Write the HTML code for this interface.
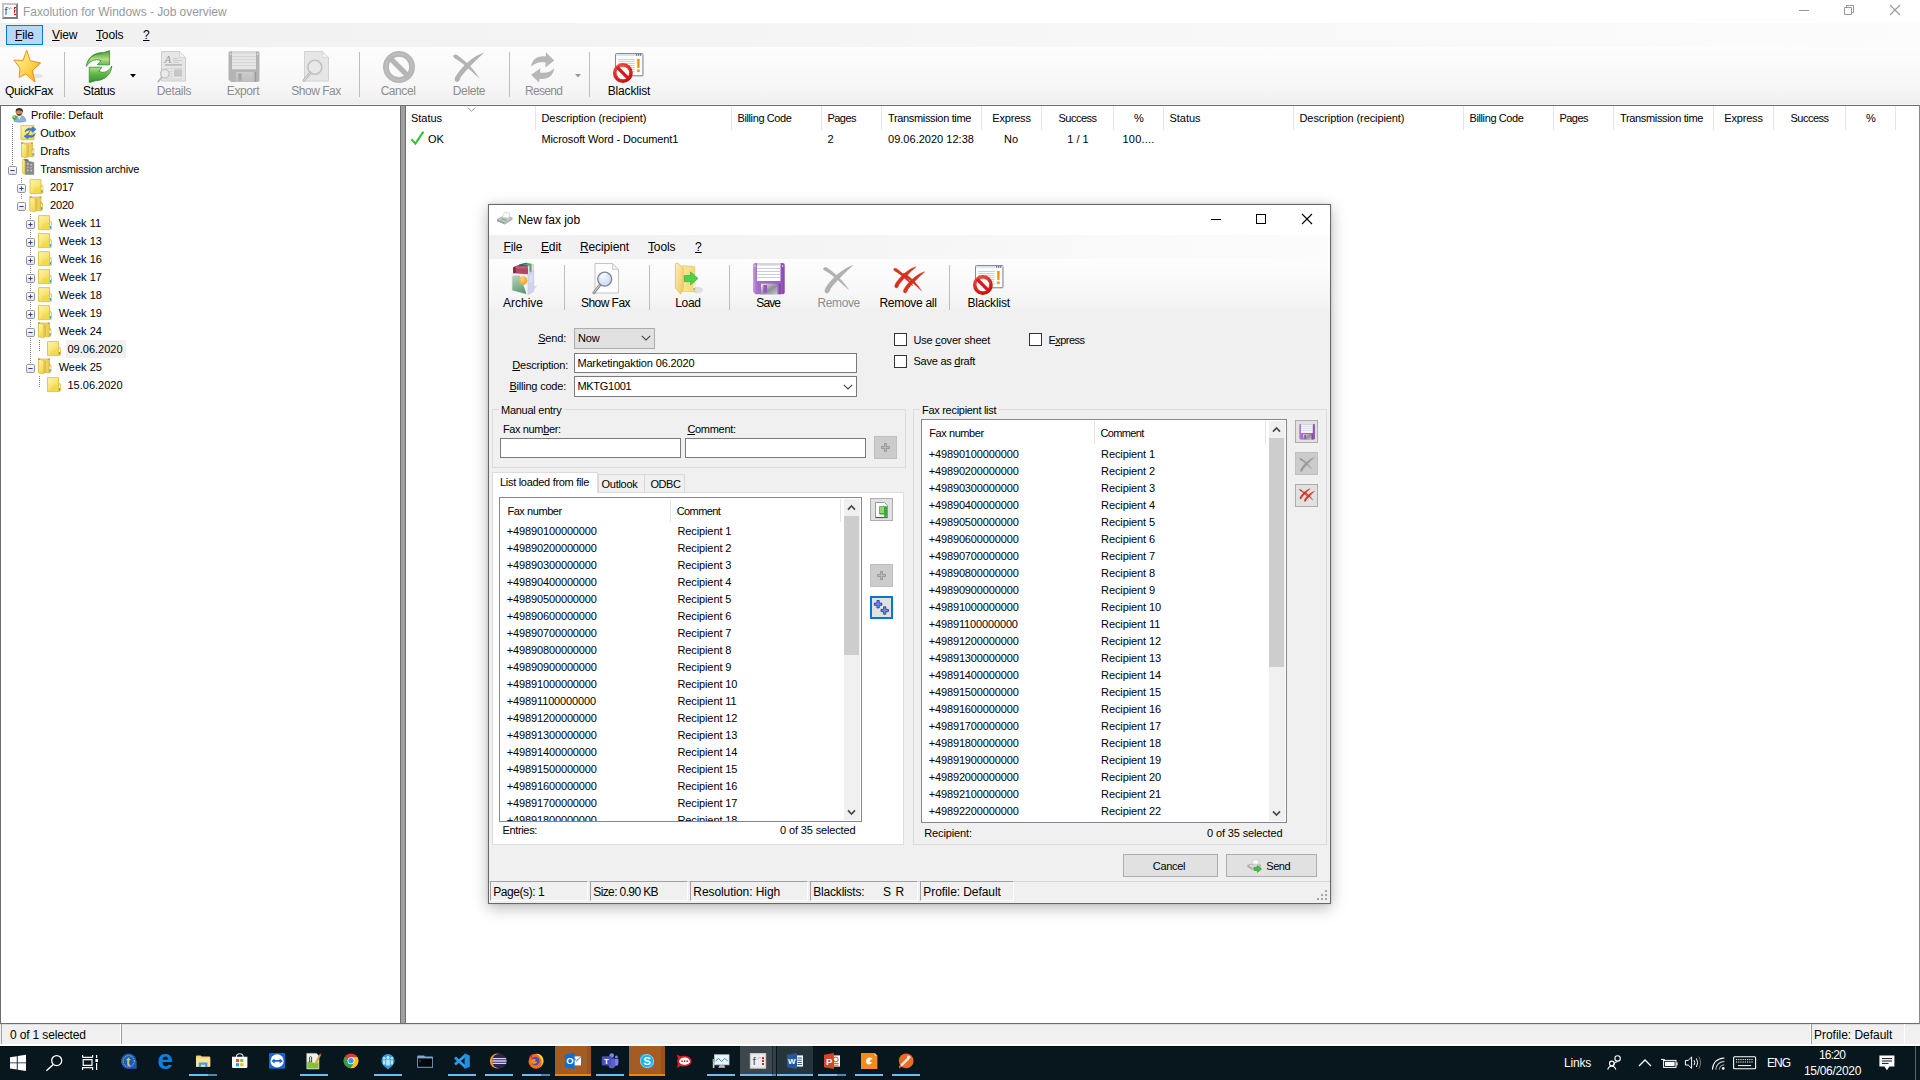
<!DOCTYPE html>
<html lang="en"><head><meta charset="utf-8"><title>Faxolution for Windows - Job overview</title>
<style>
*{box-sizing:border-box;margin:0;padding:0}
html,body{width:1920px;height:1080px;overflow:hidden;background:#fff}
body{font-family:"Liberation Sans",sans-serif;font-size:11px;color:#000;position:relative}
.a{position:absolute;white-space:nowrap}
.seg{font-size:12px;letter-spacing:-0.15px}
u{text-decoration:underline;text-underline-offset:1px}
svg{position:absolute;overflow:visible}
/* main window */
#title{left:0;top:0;width:1920px;height:23px;background:#fff}
#menubar{left:0;top:23px;width:1920px;height:24px;background:linear-gradient(90deg,#f0f0f0 0,#fcfcfc 100%)}
#toolbar{left:0;top:47px;width:1920px;height:58px;background:linear-gradient(180deg,#fdfdfd 0,#f9f9f9 45%,#f5f5f5 78%,#eeeeee 98%,#fbfbfb 100%)}
.tb{font-size:12px;letter-spacing:-0.25px;text-align:center;transform:translateX(-50%)}
.dis{color:#8d8d8d}
.tsep{width:1px;background:#bdbdbd}
#tree{left:0;top:105px;width:401px;height:919px;background:#fff;border:1px solid #6d6d6d}
#split{left:401px;top:105px;width:4px;height:919px;background:#a0a0a0;border-top:1px solid #6d6d6d;border-bottom:1px solid #6d6d6d}
#list{left:405px;top:105px;width:1515px;height:919px;background:#fff;border:1px solid #6d6d6d;border-right-color:#8a8a8a}
#status{left:0;top:1024px;width:1920px;height:22px;background:#f0f0f0;border-bottom:2px solid #fff;border-top:1px solid #dcdcdc}
#taskbar{left:0;top:1046px;width:1920px;height:34px;background:#07171d;border-top:1px solid #020c10}
.tr{font-size:11px}
.hsep{width:1px;height:24px;top:106px;background:#e5e5e5}
</style></head><body>
<!-- ===== main window title ===== -->
<div class="a" id="title"></div>
<svg style="left:2px;top:3px" width="16" height="16" viewBox="0 0 16 16"><rect x="0" y="0" width="16" height="16" fill="#c4c4c4"/><path d="M16 0V16H0L2 14H14V2Z" fill="#7f7f7f"/><rect x="2" y="2" width="12" height="12" fill="#fff"/><text x="2.6" y="12.2" font-family="Liberation Sans, sans-serif" font-size="11" fill="#555">f</text><path d="M6.6 4.6l.9 1.8l.9-1.8M9.6 5.6h.8" stroke="#8a8a8a" fill="none" stroke-width=".8"/><path d="M12 4.5h2M12 7.5h1.4M12 11.5h2M12.5 4.5v7.5" stroke="#f00" stroke-width="1" stroke-dasharray="2 1.4"/></svg>
<div class="a seg" style="left:23px;top:5px;color:#999;letter-spacing:-0.05px">Faxolution for Windows - Job overview</div>
<svg style="left:1798px;top:4px" width="12" height="12" viewBox="0 0 12 12"><path d="M1 6.5h10" stroke="#999" stroke-width="1"/></svg>
<svg style="left:1843px;top:4px" width="12" height="12" viewBox="0 0 12 12"><path d="M1.5 3.5h7v7h-7zM3.5 3.5v-2h7v7h-2" stroke="#999" fill="none" stroke-width="1"/></svg>
<svg style="left:1889px;top:4px" width="12" height="12" viewBox="0 0 12 12"><path d="M1 1l10 10M11 1L1 11" stroke="#999" stroke-width="1.1"/></svg>
<!-- ===== main menu ===== -->
<div class="a" id="menubar"></div>
<div class="a" style="left:6px;top:25px;width:37px;height:20px;background:#b8d9f4;border:1px solid #0a7ad8"></div>
<div class="a seg" style="left:15px;top:28px"><u>F</u>ile</div>
<div class="a seg" style="left:52px;top:28px"><u>V</u>iew</div>
<div class="a seg" style="left:96px;top:28px"><u>T</u>ools</div>
<div class="a seg" style="left:143px;top:28px"><u>?</u></div>
<!-- ===== main toolbar ===== -->
<div class="a" id="toolbar"></div>
<div class="a tb" style="left:29px;top:84px;letter-spacing:-0.34px">QuickFax</div>
<div class="a tsep" style="left:64px;top:52px;height:45px"></div>
<div class="a tb" style="left:99px;top:84px;letter-spacing:-0.34px">Status</div>
<svg style="left:130px;top:74px" width="6" height="4" viewBox="0 0 6 4"><path d="M0 0h6L3 3.5z" fill="#000"/></svg>
<div class="a tb dis" style="left:174px;top:84px;letter-spacing:-0.3px">Details</div>
<div class="a tb dis" style="left:243px;top:84px;letter-spacing:-0.4px">Export</div>
<div class="a tb dis" style="left:316px;top:84px;letter-spacing:-0.48px">Show Fax</div>
<div class="a tsep" style="left:359px;top:52px;height:45px"></div>
<div class="a tb dis" style="left:398px;top:84px;letter-spacing:-0.44px">Cancel</div>
<div class="a tb dis" style="left:469px;top:84px;letter-spacing:-0.4px">Delete</div>
<div class="a tsep" style="left:509px;top:52px;height:45px"></div>
<div class="a tb dis" style="left:543.7px;top:84px;letter-spacing:-0.7px">Resend</div>
<svg style="left:575px;top:74px" width="6" height="4" viewBox="0 0 6 4"><path d="M0 0h6L3 3.5z" fill="#9a9a9a"/></svg>
<div class="a tsep" style="left:589px;top:52px;height:45px"></div>
<div class="a tb" style="left:629px;top:84px;letter-spacing:-0.17px">Blacklist</div>
<svg style="left:0;top:0" width="700" height="105" viewBox="0 0 700 105">
<defs>
<linearGradient id="gStar" x1="0" y1="0" x2="1" y2="1"><stop offset="0" stop-color="#fff7b8"/><stop offset="0.4" stop-color="#ffe066"/><stop offset="0.75" stop-color="#ffc130"/><stop offset="1" stop-color="#f89c1a"/></linearGradient>
<linearGradient id="gGrn" x1="0" y1="0" x2="0" y2="1"><stop offset="0" stop-color="#3f9a35"/><stop offset="0.55" stop-color="#b5dd86"/><stop offset="1" stop-color="#56ad45"/></linearGradient>
<linearGradient id="gGrn2" x1="0" y1="0" x2="0" y2="1"><stop offset="0" stop-color="#c4e89a"/><stop offset="0.45" stop-color="#69b84f"/><stop offset="1" stop-color="#2f8f2b"/></linearGradient>
<linearGradient id="gGry" x1="0" y1="0" x2="0" y2="1"><stop offset="0" stop-color="#c9c9c9"/><stop offset="1" stop-color="#a9a9a9"/></linearGradient>
<radialGradient id="gRed" cx="0.4" cy="0.3" r="0.8"><stop offset="0" stop-color="#ff6a5a"/><stop offset="1" stop-color="#c60c0c"/></radialGradient>
</defs>
<!-- QuickFax star -->
<ellipse cx="36" cy="76" rx="7" ry="2" fill="#d8d8d8" opacity=".7"/>
<path d="M26.7 50.2L30.3 60.8L40.6 62.9L32.2 70.8L35 82L25.8 74L19.2 77.4L20 68L13.9 60.2L23 60.4Z" fill="url(#gStar)" stroke="#f0901c" stroke-width="1" stroke-linejoin="round"/>
<path d="M30.3 60.8L40.6 62.9L32.2 70.8L35 82L33 70.5L38.5 63.6Z" fill="#f08a1c" opacity=".55"/>
<!-- Status arrows -->
<path d="M86.4 66.4C87 58.5 93.5 52.3 103.6 52.6L109.5 50.7L109.6 64.8L97.4 64.8L101.1 60.7C94.5 58 89.5 61.5 86.4 66.4Z" fill="url(#gGrn)" stroke="#2f8f2c" stroke-width=".8" stroke-linejoin="round"/>
<path d="M88.2 61.5C90 56.5 95.5 53.6 102 53.8" fill="none" stroke="#2f8a2a" stroke-width="1" opacity=".6"/>
<path d="M111.75 66C111.5 74 105 80.5 95.5 80.7L89.25 82.6L89.25 67.25L101.75 67.25L98.9 71.3C104.5 74 109 71 111.75 66Z" fill="url(#gGrn2)" stroke="#2f8f2c" stroke-width=".8" stroke-linejoin="round"/>
<!-- Details (disabled) -->
<path d="M161.5 51.5H179.5L185.5 57.5V81H161.5Z" fill="#e6e6e6" stroke="#cecece" stroke-width="1"/>
<path d="M179.5 51.5V57.5H185.5Z" fill="#f2f2f2" stroke="#cecece" stroke-width=".7"/>
<text x="164.4" y="62.8" font-family="Liberation Serif, serif" font-style="italic" font-size="11" fill="#9c9c9c">A</text>
<path d="M173 58.5H178M173 60.5H182M173 62.5H179" stroke="#cacaca" stroke-width=".9"/>
<rect x="165" y="64" width="17" height="1.8" fill="#bdbdbd"/>
<path d="M166 68.5H182M170 71.5H173M170 74H173M170 76.5H173M166 79H182" stroke="#cfcfcf" stroke-width=".8"/>
<rect x="174" y="69.5" width="8" height="7" fill="#c6c6c6"/>
<circle cx="164.8" cy="73.7" r="4.3" fill="#e9e9e9" fill-opacity=".85" stroke="#c2c2c2" stroke-width="1.3"/>
<path d="M161.6 77.3L158.3 81.5" stroke="#b8b8b8" stroke-width="1.8" stroke-linecap="round"/>
<!-- Export (disabled floppy) -->
<path d="M228.5 53Q228.5 51.3 230.2 51.3H257.8Q259.5 51.3 259.5 53V80.3Q259.5 82 257.8 82H231L228.5 79.5Z" fill="#b4b4b4"/>
<rect x="232" y="51.3" width="24" height="18" fill="#e6e6e6"/>
<rect x="232" y="51.3" width="24" height="2.4" fill="#d8d8d8"/>
<path d="M232 56.5H256M232 59.5H256M232 62.5H256M232 65.5H256" stroke="#d2d2d2" stroke-width=".9"/>
<rect x="229.8" y="53.3" width="1.4" height="1.4" fill="#e8e8e8"/><rect x="256.9" y="53.3" width="1.4" height="1.4" fill="#e8e8e8"/>
<rect x="236" y="72" width="17.5" height="10" fill="url(#gGry)"/><rect x="236" y="72" width="17.5" height="10" fill="#d0d0d0" opacity=".55"/>
<rect x="238.3" y="73.3" width="3.2" height="7.5" fill="#a6a6a6"/>
<rect x="255" y="72" width="1.2" height="10" fill="#9a9a9a"/>
<!-- Show Fax (disabled) -->
<path d="M304.5 51.5H322.5L328.5 57.5V81H304.5Z" fill="#e6e6e6" stroke="#d2d2d2" stroke-width="1"/>
<path d="M322.5 51.5V57.5H328.5Z" fill="#f2f2f2" stroke="#d2d2d2" stroke-width=".7"/>
<circle cx="314.8" cy="67.3" r="7" fill="#e8e8e8" fill-opacity=".9" stroke="#c0c0c0" stroke-width="1.6"/>
<path d="M310.2 72.8L303.8 80.6" stroke="#bdbdbd" stroke-width="2.8" stroke-linecap="round"/><path d="M310 73L304 80.4" stroke="#dcdcdc" stroke-width="1" stroke-linecap="round"/>
<!-- Cancel (disabled) -->
<circle cx="399" cy="67" r="13.1" fill="none" stroke="#b6b6b6" stroke-width="5.8"/>
<circle cx="399" cy="67" r="13.1" fill="none" stroke="#c4c4c4" stroke-width="1.6" opacity=".7"/>
<path d="M389.6 57.6L408.4 76.4" stroke="#b6b6b6" stroke-width="5.4"/>
<!-- Delete (disabled) -->
<path d="M484.4 52.4C474 55 461 67 455.6 76.5C454 79.6 454.8 82.2 457.2 81.9C459.8 81.5 459.8 79 461 76.8C466 70 476 60 484.4 52.4Z" fill="#b3b3b3"/>
<path d="M453.4 55.6C454 54 456.5 54.4 458.5 56C466 61.6 474 69 479.8 78.8C470.5 70.5 462.5 62.4 455 58.4C453.6 57.6 453 56.6 453.4 55.6Z" fill="#b3b3b3"/>
<!-- Resend (disabled) -->
<path d="M531.2 66.8C531.8 59 538 55.3 545.6 56.4L546 52.4L554.3 60.4L545.3 67.4L545.6 62.8C540 61.4 535 63 531.2 66.8Z" fill="#b7b7b7"/>
<path d="M554.1 68.2C553.5 76 547 79.9 539.6 78.8L539 82.6L531.1 74.8L540.5 68.2L540 72.4C545.6 73.6 550.6 72 554.1 68.2Z" fill="#b7b7b7"/>
<!-- Blacklist -->
<rect x="616.2" y="54.4" width="27.6" height="22.4" rx="1" fill="#000" opacity=".10"/>
<rect x="615.5" y="53.5" width="27.4" height="22.2" rx=".8" fill="#fdfdfd" stroke="#858b96" stroke-width="1"/>
<rect x="616" y="54" width="26.4" height="2" fill="#dde3ee"/>
<path d="M636 54.8h1.2M638 54.8h1.2M640 54.8h1.2" stroke="#3c4c7c" stroke-width="1.2"/>
<path d="M618.2 59.5H634.6M618.2 61.5H634.6M618.2 63.5H634.6M618.2 65.5H634.6M618.2 67.5H634.6M618.2 69.5H634.6M618.2 71.5H634.6" stroke="#c4c4c4" stroke-width=".8"/>
<text x="635.6" y="72.4" font-family="Liberation Sans, sans-serif" font-weight="bold" font-size="18" fill="#ec9414">!</text>
<circle cx="622.9" cy="73" r="8.1" fill="#fff" fill-opacity=".82" stroke="url(#gRed)" stroke-width="3.6"/>
<path d="M617.3 67.4L628.5 78.6" stroke="#d81818" stroke-width="3.3"/>
</svg>

<!-- ===== panels ===== -->
<div class="a" id="tree"></div>
<div class="a" id="split"></div>
<div class="a" id="list"></div>
<svg style="left:0;top:0" width="402" height="400" viewBox="0 0 402 400">
<defs><linearGradient id="gF" x1="0" y1="0" x2="0.6" y2="1"><stop offset="0" stop-color="#fdf6b8"/><stop offset="0.55" stop-color="#f8e67a"/><stop offset="1" stop-color="#f1d74a"/></linearGradient><linearGradient id="gF2" x1="0" y1="0" x2="1" y2="0"><stop offset="0" stop-color="#fbf0a0"/><stop offset="1" stop-color="#e9c84a"/></linearGradient><linearGradient id="gBx" x1="0" y1="0" x2="0" y2="1"><stop offset="0" stop-color="#fff"/><stop offset="1" stop-color="#e2e2e2"/></linearGradient></defs>
<path d="M12.5 124V166" stroke="#808080" stroke-width="1" stroke-dasharray="1 1"/>
<path d="M21.5 178V200" stroke="#808080" stroke-width="1" stroke-dasharray="1 1"/>
<path d="M30.5 214V364" stroke="#808080" stroke-width="1" stroke-dasharray="1 1"/>
<path d="M39.5 340V352" stroke="#808080" stroke-width="1" stroke-dasharray="1 1"/>
<path d="M39.5 376V388" stroke="#808080" stroke-width="1" stroke-dasharray="1 1"/>
<g transform="translate(12,107)"><path d="M2 14.5Q2 8.5 7.5 8.5Q13.5 8.5 13.8 14.2Q8 16 2 14.5Z" fill="#8fb3d9" stroke="#6a8fbd" stroke-width=".6"/><path d="M5.8 9L7.4 12.5L9 9Z" fill="#f4f4f4"/><circle cx="7.2" cy="5.2" r="3.4" fill="#c98a5a"/><path d="M3.6 5Q3.4 1 7.2 1Q11.6 1 10.9 5.5Q9.5 3 7 3.2Q4.6 3.2 3.6 5Z" fill="#3b2a1a"/><path d="M4.3 6.3Q7.2 11 10.2 6.3Q7.2 8 4.3 6.3Z" fill="#4a2f1a"/><circle cx="2.6" cy="10.6" r="2.4" fill="#3fae3a"/><circle cx="2.2" cy="10" r="1" fill="#b7e88f"/></g>
<g transform="translate(20.5,125.2)"><rect x=".5" y=".5" width="13" height="14" fill="url(#gF)" stroke="#e2bd4c" stroke-width=".9"/><path d="M4.5 6.8C5 3.6 8.5 2.2 11 3.6L12 1.6L15.6 4.2L11.6 7L11.4 5.2C9 4.3 6.2 5 4.5 6.8Z" fill="#2f7fe0" stroke="#1c5fbf" stroke-width=".5"/><path d="M14.8 8.2C14.2 11.6 10.8 13 8.2 11.6L7.4 13.6L3.6 11L7.6 8.2L7.8 10C10.4 10.9 13 10.2 14.8 8.2Z" fill="#2f7fe0" stroke="#1c5fbf" stroke-width=".5"/><path d="M7.5 9L10 5" stroke="#a33" stroke-width=".8"/></g>
<path d="M21.5 143.0H32.5V156.7H21.5Z" fill="url(#gF2)" stroke="#d9b848" stroke-width=".8"/><path d="M21.5 143.2L26.8 144.39999999999998V157.79999999999998L21.5 156.79999999999998Z" fill="url(#gF)" stroke="#e2bd4c" stroke-width=".8"/><path d="M27.3 144.7L29.0 144.2V156.2L27.3 157.2Z" fill="#d8b83e" opacity=".8"/><path d="M32.3 148.0L34.0 149.2V155.79999999999998L32.3 156.7Z" fill="#efd050" stroke="#c9a840" stroke-width=".6"/><rect x="32.6" y="150.2" width="1" height="3.4" fill="#fff"/><rect x="32.6" y="153.2" width="1" height="2" fill="#1aa3e0"/><rect x="21.0" y="142.5" width="2" height="1" fill="#666" opacity=".7"/><rect x="31.0" y="142.5" width="2" height="1" fill="#666" opacity=".5"/>
<g transform="translate(22.0,158.2)"><path d="M.5 1L3.2 1.8V16L.5 15Z" fill="url(#gF)" stroke="#e2bd4c" stroke-width=".7"/><path d="M3.4 2.2L11.8 4.2V16.2L3.4 16.2Z" fill="#8a8a8a" stroke="#777" stroke-width=".5"/><path d="M2.2 .6L6.6 1.4L6.6 3.2L2.4 2.2Z" fill="#6f6f6f"/><g fill="#c9d3ee"><rect x="5" y="5" width="1.5" height="1.5"/><rect x="8.4" y="5.8" width="1.5" height="1.5"/><rect x="5" y="11.4" width="1.5" height="1.5"/><rect x="8.4" y="11.6" width="1.5" height="1.5"/></g><g fill="#f0b44a"><rect x="5" y="8.2" width="1.5" height="1.5"/><rect x="8.4" y="8.8" width="1.5" height="1.5"/></g><rect x="5" y="14.2" width="1.5" height="1.2" fill="#57b487"/><rect x="8.4" y="14.2" width="1.5" height="1.2" fill="#57b487"/></g>
<rect x="8.5" y="166.5" width="8" height="8" rx="1.2" fill="url(#gBx)" stroke="#939393" stroke-width="1"/><path d="M10.4 170.5H14.6" stroke="#26429e" stroke-width="1"/>
<path d="M30.0 179.6H41.0V193.6H30.0Z" fill="url(#gF)" stroke="#e6c458" stroke-width="1"/><path d="M32.5 193.1Q33.5 187.6 38.5 187.1H40.5V193.1Z" fill="#f0da48" opacity=".75"/><path d="M41.0 184.7L43.0 186.1V193.1L41.0 193.6Z" fill="#efd050" stroke="#d9b848" stroke-width=".6"/><rect x="41.5" y="186.7" width="1" height="3.6" fill="#fff"/><rect x="41.5" y="190.1" width="1" height="2.2" fill="#1aa3e0"/>
<rect x="17.5" y="184.5" width="8" height="8" rx="1.2" fill="url(#gBx)" stroke="#939393" stroke-width="1"/><path d="M19.4 188.5H23.6" stroke="#26429e" stroke-width="1"/><path d="M21.5 186.4V190.6" stroke="#26429e" stroke-width="1"/>
<path d="M30.0 197.0H41.0V210.7H30.0Z" fill="url(#gF2)" stroke="#d9b848" stroke-width=".8"/><path d="M30.0 197.2L35.3 198.39999999999998V211.79999999999998L30.0 210.79999999999998Z" fill="url(#gF)" stroke="#e2bd4c" stroke-width=".8"/><path d="M35.8 198.7L37.5 198.2V210.2L35.8 211.2Z" fill="#d8b83e" opacity=".8"/><path d="M40.8 202.0L42.5 203.2V209.79999999999998L40.8 210.7Z" fill="#efd050" stroke="#c9a840" stroke-width=".6"/><rect x="41.1" y="204.2" width="1" height="3.4" fill="#fff"/><rect x="41.1" y="207.2" width="1" height="2" fill="#1aa3e0"/><rect x="29.5" y="196.5" width="2" height="1" fill="#666" opacity=".7"/><rect x="39.5" y="196.5" width="2" height="1" fill="#666" opacity=".5"/>
<rect x="17.5" y="202.5" width="8" height="8" rx="1.2" fill="url(#gBx)" stroke="#939393" stroke-width="1"/><path d="M19.4 206.5H23.6" stroke="#26429e" stroke-width="1"/>
<path d="M38.5 215.6H49.5V229.6H38.5Z" fill="url(#gF)" stroke="#e6c458" stroke-width="1"/><path d="M41 229.1Q42 223.6 47 223.1H49V229.1Z" fill="#f0da48" opacity=".75"/><path d="M49.5 220.7L51.5 222.1V229.1L49.5 229.6Z" fill="#efd050" stroke="#d9b848" stroke-width=".6"/><rect x="50" y="222.7" width="1" height="3.6" fill="#fff"/><rect x="50" y="226.1" width="1" height="2.2" fill="#1aa3e0"/>
<rect x="26.5" y="220.5" width="8" height="8" rx="1.2" fill="url(#gBx)" stroke="#939393" stroke-width="1"/><path d="M28.4 224.5H32.6" stroke="#26429e" stroke-width="1"/><path d="M30.5 222.4V226.6" stroke="#26429e" stroke-width="1"/>
<path d="M38.5 233.6H49.5V247.6H38.5Z" fill="url(#gF)" stroke="#e6c458" stroke-width="1"/><path d="M41 247.1Q42 241.6 47 241.1H49V247.1Z" fill="#f0da48" opacity=".75"/><path d="M49.5 238.7L51.5 240.1V247.1L49.5 247.6Z" fill="#efd050" stroke="#d9b848" stroke-width=".6"/><rect x="50" y="240.7" width="1" height="3.6" fill="#fff"/><rect x="50" y="244.1" width="1" height="2.2" fill="#1aa3e0"/>
<rect x="26.5" y="238.5" width="8" height="8" rx="1.2" fill="url(#gBx)" stroke="#939393" stroke-width="1"/><path d="M28.4 242.5H32.6" stroke="#26429e" stroke-width="1"/><path d="M30.5 240.4V244.6" stroke="#26429e" stroke-width="1"/>
<path d="M38.5 251.6H49.5V265.6H38.5Z" fill="url(#gF)" stroke="#e6c458" stroke-width="1"/><path d="M41 265.1Q42 259.6 47 259.1H49V265.1Z" fill="#f0da48" opacity=".75"/><path d="M49.5 256.7L51.5 258.1V265.1L49.5 265.6Z" fill="#efd050" stroke="#d9b848" stroke-width=".6"/><rect x="50" y="258.7" width="1" height="3.6" fill="#fff"/><rect x="50" y="262.1" width="1" height="2.2" fill="#1aa3e0"/>
<rect x="26.5" y="256.5" width="8" height="8" rx="1.2" fill="url(#gBx)" stroke="#939393" stroke-width="1"/><path d="M28.4 260.5H32.6" stroke="#26429e" stroke-width="1"/><path d="M30.5 258.4V262.6" stroke="#26429e" stroke-width="1"/>
<path d="M38.5 269.6H49.5V283.6H38.5Z" fill="url(#gF)" stroke="#e6c458" stroke-width="1"/><path d="M41 283.1Q42 277.6 47 277.1H49V283.1Z" fill="#f0da48" opacity=".75"/><path d="M49.5 274.70000000000005L51.5 276.1V283.1L49.5 283.6Z" fill="#efd050" stroke="#d9b848" stroke-width=".6"/><rect x="50" y="276.70000000000005" width="1" height="3.6" fill="#fff"/><rect x="50" y="280.1" width="1" height="2.2" fill="#1aa3e0"/>
<rect x="26.5" y="274.5" width="8" height="8" rx="1.2" fill="url(#gBx)" stroke="#939393" stroke-width="1"/><path d="M28.4 278.5H32.6" stroke="#26429e" stroke-width="1"/><path d="M30.5 276.4V280.6" stroke="#26429e" stroke-width="1"/>
<path d="M38.5 287.6H49.5V301.6H38.5Z" fill="url(#gF)" stroke="#e6c458" stroke-width="1"/><path d="M41 301.1Q42 295.6 47 295.1H49V301.1Z" fill="#f0da48" opacity=".75"/><path d="M49.5 292.70000000000005L51.5 294.1V301.1L49.5 301.6Z" fill="#efd050" stroke="#d9b848" stroke-width=".6"/><rect x="50" y="294.70000000000005" width="1" height="3.6" fill="#fff"/><rect x="50" y="298.1" width="1" height="2.2" fill="#1aa3e0"/>
<rect x="26.5" y="292.5" width="8" height="8" rx="1.2" fill="url(#gBx)" stroke="#939393" stroke-width="1"/><path d="M28.4 296.5H32.6" stroke="#26429e" stroke-width="1"/><path d="M30.5 294.4V298.6" stroke="#26429e" stroke-width="1"/>
<path d="M38.5 305.6H49.5V319.6H38.5Z" fill="url(#gF)" stroke="#e6c458" stroke-width="1"/><path d="M41 319.1Q42 313.6 47 313.1H49V319.1Z" fill="#f0da48" opacity=".75"/><path d="M49.5 310.70000000000005L51.5 312.1V319.1L49.5 319.6Z" fill="#efd050" stroke="#d9b848" stroke-width=".6"/><rect x="50" y="312.70000000000005" width="1" height="3.6" fill="#fff"/><rect x="50" y="316.1" width="1" height="2.2" fill="#1aa3e0"/>
<rect x="26.5" y="310.5" width="8" height="8" rx="1.2" fill="url(#gBx)" stroke="#939393" stroke-width="1"/><path d="M28.4 314.5H32.6" stroke="#26429e" stroke-width="1"/><path d="M30.5 312.4V316.6" stroke="#26429e" stroke-width="1"/>
<path d="M38.5 323.0H49.5V336.7H38.5Z" fill="url(#gF2)" stroke="#d9b848" stroke-width=".8"/><path d="M38.5 323.2L43.8 324.4V337.8L38.5 336.8Z" fill="url(#gF)" stroke="#e2bd4c" stroke-width=".8"/><path d="M44.3 324.7L46 324.2V336.2L44.3 337.2Z" fill="#d8b83e" opacity=".8"/><path d="M49.3 328.0L51 329.2V335.8L49.3 336.7Z" fill="#efd050" stroke="#c9a840" stroke-width=".6"/><rect x="49.6" y="330.2" width="1" height="3.4" fill="#fff"/><rect x="49.6" y="333.2" width="1" height="2" fill="#1aa3e0"/><rect x="38" y="322.5" width="2" height="1" fill="#666" opacity=".7"/><rect x="48" y="322.5" width="2" height="1" fill="#666" opacity=".5"/>
<rect x="26.5" y="328.5" width="8" height="8" rx="1.2" fill="url(#gBx)" stroke="#939393" stroke-width="1"/><path d="M28.4 332.5H32.6" stroke="#26429e" stroke-width="1"/>
<path d="M47.5 341.6H58.5V355.6H47.5Z" fill="url(#gF)" stroke="#e6c458" stroke-width="1"/><path d="M50 355.1Q51 349.6 56 349.1H58V355.1Z" fill="#f0da48" opacity=".75"/><path d="M58.5 346.70000000000005L60.5 348.1V355.1L58.5 355.6Z" fill="#efd050" stroke="#d9b848" stroke-width=".6"/><rect x="59" y="348.70000000000005" width="1" height="3.6" fill="#fff"/><rect x="59" y="352.1" width="1" height="2.2" fill="#1aa3e0"/>
<path d="M38.5 359.0H49.5V372.7H38.5Z" fill="url(#gF2)" stroke="#d9b848" stroke-width=".8"/><path d="M38.5 359.2L43.8 360.4V373.8L38.5 372.8Z" fill="url(#gF)" stroke="#e2bd4c" stroke-width=".8"/><path d="M44.3 360.7L46 360.2V372.2L44.3 373.2Z" fill="#d8b83e" opacity=".8"/><path d="M49.3 364.0L51 365.2V371.8L49.3 372.7Z" fill="#efd050" stroke="#c9a840" stroke-width=".6"/><rect x="49.6" y="366.2" width="1" height="3.4" fill="#fff"/><rect x="49.6" y="369.2" width="1" height="2" fill="#1aa3e0"/><rect x="38" y="358.5" width="2" height="1" fill="#666" opacity=".7"/><rect x="48" y="358.5" width="2" height="1" fill="#666" opacity=".5"/>
<rect x="26.5" y="364.5" width="8" height="8" rx="1.2" fill="url(#gBx)" stroke="#939393" stroke-width="1"/><path d="M28.4 368.5H32.6" stroke="#26429e" stroke-width="1"/>
<path d="M47.5 377.6H58.5V391.6H47.5Z" fill="url(#gF)" stroke="#e6c458" stroke-width="1"/><path d="M50 391.1Q51 385.6 56 385.1H58V391.1Z" fill="#f0da48" opacity=".75"/><path d="M58.5 382.70000000000005L60.5 384.1V391.1L58.5 391.6Z" fill="#efd050" stroke="#d9b848" stroke-width=".6"/><rect x="59" y="384.70000000000005" width="1" height="3.6" fill="#fff"/><rect x="59" y="388.1" width="1" height="2.2" fill="#1aa3e0"/>
</svg>
<div class="a" style="left:66px;top:340px;width:60px;height:18px;background:#f0f0f0"></div>
<div class="a tr" style="left:31px;top:109px">Profile: Default</div>
<div class="a tr" style="left:40.3px;top:127px">Outbox</div>
<div class="a tr" style="left:40.3px;top:145px">Drafts</div>
<div class="a tr" style="left:40.3px;top:163px;letter-spacing:-0.236px">Transmission archive</div>
<div class="a tr" style="left:50px;top:181px;letter-spacing:-0.18px">2017</div>
<div class="a tr" style="left:50px;top:199px;letter-spacing:-0.18px">2020</div>
<div class="a tr" style="left:58.7px;top:217px">Week 11</div>
<div class="a tr" style="left:58.7px;top:235px">Week 13</div>
<div class="a tr" style="left:58.7px;top:253px">Week 16</div>
<div class="a tr" style="left:58.7px;top:271px">Week 17</div>
<div class="a tr" style="left:58.7px;top:289px">Week 18</div>
<div class="a tr" style="left:58.7px;top:307px">Week 19</div>
<div class="a tr" style="left:58.7px;top:325px">Week 24</div>
<div class="a tr" style="left:67.5px;top:343px">09.06.2020</div>
<div class="a tr" style="left:58.7px;top:361px">Week 25</div>
<div class="a tr" style="left:67.5px;top:379px">15.06.2020</div>

<div class="a hsep" style="left:535px"></div>
<div class="a hsep" style="left:731px"></div>
<div class="a hsep" style="left:821px"></div>
<div class="a hsep" style="left:881px"></div>
<div class="a hsep" style="left:981px"></div>
<div class="a hsep" style="left:1041px"></div>
<div class="a hsep" style="left:1113px"></div>
<div class="a hsep" style="left:1163px"></div>
<div class="a hsep" style="left:1293px"></div>
<div class="a hsep" style="left:1463px"></div>
<div class="a hsep" style="left:1553px"></div>
<div class="a hsep" style="left:1613px"></div>
<div class="a hsep" style="left:1713px"></div>
<div class="a hsep" style="left:1773px"></div>
<div class="a hsep" style="left:1845px"></div>
<div class="a hsep" style="left:1895px"></div>
<div class="a tr" style="left:411px;top:112px;letter-spacing:-0.03px">Status</div>
<div class="a tr" style="left:541.5px;top:112px;letter-spacing:-0.09px">Description (recipient)</div>
<div class="a tr" style="left:737.5px;top:112px;letter-spacing:-0.39px">Billing Code</div>
<div class="a tr" style="left:827.5px;top:112px;letter-spacing:-0.54px">Pages</div>
<div class="a tr" style="left:888px;top:112px;letter-spacing:-0.34px">Transmission time</div>
<div class="a tr" style="left:1011.5px;top:112px;letter-spacing:-0.18px;transform:translateX(-50%)">Express</div>
<div class="a tr" style="left:1077.5px;top:112px;letter-spacing:-0.51px;transform:translateX(-50%)">Success</div>
<div class="a tr" style="left:1139px;top:112px;letter-spacing:0px;transform:translateX(-50%)">%</div>
<div class="a tr" style="left:1169.5px;top:112px;letter-spacing:-0.03px">Status</div>
<div class="a tr" style="left:1299.5px;top:112px;letter-spacing:-0.09px">Description (recipient)</div>
<div class="a tr" style="left:1469.5px;top:112px;letter-spacing:-0.39px">Billing Code</div>
<div class="a tr" style="left:1559.5px;top:112px;letter-spacing:-0.54px">Pages</div>
<div class="a tr" style="left:1620px;top:112px;letter-spacing:-0.34px">Transmission time</div>
<div class="a tr" style="left:1743.5px;top:112px;letter-spacing:-0.18px;transform:translateX(-50%)">Express</div>
<div class="a tr" style="left:1809.5px;top:112px;letter-spacing:-0.51px;transform:translateX(-50%)">Success</div>
<div class="a tr" style="left:1871px;top:112px;letter-spacing:0px;transform:translateX(-50%)">%</div>
<svg style="left:467px;top:107px" width="9" height="5" viewBox="0 0 9 5"><path d="M.5 .5L4.5 4.2L8.5 .5" fill="none" stroke="#9a9a9a" stroke-width="1"/></svg>
<svg style="left:410px;top:130px" width="16" height="16" viewBox="0 0 16 16"><path d="M1.4 9.2L5.4 13.6L13.4 1.6" fill="none" stroke="#35c435" stroke-width="2.1" stroke-linejoin="miter"/></svg>
<div class="a tr" style="left:428px;top:133px">OK</div>
<div class="a tr" style="left:541.5px;top:133px;letter-spacing:-0.12px">Microsoft Word - Document1</div>
<div class="a tr" style="left:827.5px;top:133px">2</div>
<div class="a tr" style="left:888px;top:133px;letter-spacing:0.02px">09.06.2020 12:38</div>
<div class="a tr" style="left:1011px;top:133px;transform:translateX(-50%)">No</div>
<div class="a tr" style="left:1078px;top:133px;transform:translateX(-50%)">1 / 1</div>
<div class="a tr" style="left:1138.5px;top:133px;transform:translateX(-50%);letter-spacing:0.2px">100....</div>

<!-- ===== main status bar ===== -->
<div class="a" id="status"></div>
<div class="a" style="left:1px;top:1024px;width:1px;height:20px;background:#a0a0a0"></div>
<div class="a" style="left:120px;top:1024px;width:1px;height:20px;background:#fff"></div>
<div class="a" style="left:121px;top:1024px;width:1px;height:20px;background:#a0a0a0"></div>
<div class="a seg" style="left:10px;top:1028px">0 of 1 selected</div>
<div class="a" style="left:1810px;top:1024px;width:1px;height:20px;background:#fff"></div>
<div class="a" style="left:1811px;top:1024px;width:1px;height:20px;background:#a0a0a0"></div>
<div class="a" style="left:1904px;top:1024px;width:1px;height:20px;background:#fff"></div>
<div class="a seg" style="left:1814px;top:1028px;letter-spacing:-0.03px">Profile: Default</div>
<div class="a" id="taskbar"></div>
<div class="a" style="left:555px;top:1046px;width:36px;height:28px;background:#a45c22"></div>
<div class="a" style="left:587px;top:1046px;width:4px;height:28px;background:#96531e"></div>
<div class="a" style="left:555px;top:1074px;width:36px;height:2px;background:#f6820e"></div>
<div class="a" style="left:629px;top:1046px;width:36px;height:28px;background:#a45c22"></div>
<div class="a" style="left:661px;top:1046px;width:4px;height:28px;background:#96531e"></div>
<div class="a" style="left:629px;top:1074px;width:36px;height:2px;background:#f6820e"></div>
<div class="a" style="left:740px;top:1046px;width:36px;height:30px;background:#3b474c"></div>
<div class="a" style="left:772px;top:1046px;width:1px;height:30px;background:#1d282d"></div>
<div class="a" style="left:773px;top:1046px;width:3px;height:30px;background:#333f44"></div>
<div class="a" style="left:777px;top:1046px;width:36px;height:30px;background:#26353b"></div>
<div class="a" style="left:189px;top:1074px;width:28px;height:2px;background:#76b9ed"></div>
<div class="a" style="left:208px;top:1074px;width:9px;height:2px;background:#4d89b5"></div>
<div class="a" style="left:300px;top:1074px;width:28px;height:2px;background:#76b9ed"></div>
<div class="a" style="left:374px;top:1074px;width:28px;height:2px;background:#76b9ed"></div>
<div class="a" style="left:448px;top:1074px;width:28px;height:2px;background:#76b9ed"></div>
<div class="a" style="left:485px;top:1074px;width:28px;height:2px;background:#76b9ed"></div>
<div class="a" style="left:522px;top:1074px;width:28px;height:2px;background:#76b9ed"></div>
<div class="a" style="left:541px;top:1074px;width:9px;height:2px;background:#4d89b5"></div>
<div class="a" style="left:596px;top:1074px;width:28px;height:2px;background:#76b9ed"></div>
<div class="a" style="left:707px;top:1074px;width:28px;height:2px;background:#76b9ed"></div>
<div class="a" style="left:740px;top:1074px;width:36px;height:2px;background:#76b9ed"></div>
<div class="a" style="left:772px;top:1074px;width:4px;height:2px;background:#4d89b5"></div>
<div class="a" style="left:777px;top:1074px;width:36px;height:2px;background:#76b9ed"></div>
<div class="a" style="left:818px;top:1074px;width:28px;height:2px;background:#76b9ed"></div>
<div class="a" style="left:837px;top:1074px;width:9px;height:2px;background:#4d89b5"></div>
<div class="a" style="left:855px;top:1074px;width:28px;height:2px;background:#76b9ed"></div>
<div class="a" style="left:892px;top:1074px;width:28px;height:2px;background:#76b9ed"></div>
<svg style="left:0;top:1046px" width="1920" height="34" viewBox="0 1046 1920 34">
<path d="M10 1057.2L16.8 1056.2V1062.4H10ZM17.7 1056.1L26 1054.8V1062.4H17.7ZM10 1063.3H16.8V1069.6L10 1068.6ZM17.7 1063.3H26V1071L17.7 1069.7Z" fill="#fff"/>
<circle cx="56.7" cy="1060.6" r="5" fill="none" stroke="#fff" stroke-width="1.3"/><path d="M53.3 1064.5L46.4 1070.8" stroke="#fff" stroke-width="1.4"/>
<path d="M82.6 1055V1057.4M82.6 1057.4H92.6M92.6 1055V1057.4M83.2 1059.6H92V1065.4H83.2ZM82.6 1070V1067.6H92.6V1070M96.6 1055V1058M96.6 1063V1070" fill="none" stroke="#fff" stroke-width="1.2"/><rect x="95.4" y="1059" width="2.6" height="3" fill="#fff"/>
<path d="M128.7 1053.6A7.7 7.7 0 1 0 136.4 1061.3V1068.6H129Z" fill="#1b5fb8" opacity="0"/><circle cx="128.7" cy="1061.2" r="7.7" fill="#1a5cb5"/><path d="M128.7 1061.2H136.6V1068.8H131Z" fill="#1a5cb5"/><circle cx="128.7" cy="1061.2" r="5.6" fill="none" stroke="#cfe0f5" stroke-width=".8" stroke-dasharray="1.2 1"/>
<text x="126.3" y="1065.6" font-family="Liberation Sans, sans-serif" font-weight="bold" font-size="12" fill="#c9d92a">t</text>
<text x="157.6" y="1069.2" font-family="Liberation Sans, sans-serif" font-weight="bold" font-size="28" fill="#0f7fdc">e</text>
<path d="M196 1056.2Q196 1055.4 196.8 1055.4H200.6L201.8 1056.6H209.4Q210.2 1056.6 210.2 1057.4V1066.6H196Z" fill="#f5d27a"/><path d="M196 1058.2H210.2V1066.8H196Z" fill="#fbe49a"/><path d="M198.8 1062.4H207.4V1067H205.2V1064.8H201V1067H198.8Z" fill="#3f9fe6"/>
<path d="M236.4 1057C236.4 1052.6 243.2 1052.6 243.2 1057" fill="none" stroke="#e9e9e9" stroke-width="1.1"/><path d="M232 1056.8H247.4V1066.8Q247.4 1068 246.2 1068H233.2Q232 1068 232 1066.8Z" fill="#fdfdfd"/><rect x="236" y="1059" width="3.1" height="3.1" fill="#f0502a"/><rect x="240.2" y="1059" width="3.1" height="3.1" fill="#7fc51c"/><rect x="236" y="1063.2" width="3.1" height="3.1" fill="#14a6ee"/><rect x="240.2" y="1063.2" width="3.1" height="3.1" fill="#fdb813"/>
<rect x="269" y="1053" width="16.2" height="15.8" rx="1" fill="#1366d6"/><circle cx="277.1" cy="1060.9" r="6.6" fill="#fff"/><path d="M271.4 1060.9L274.6 1058.4V1060.1H279.6V1058.4L282.8 1060.9L279.6 1063.4V1061.7H274.6V1063.4Z" fill="#1366d6"/>
<path d="M306.8 1053.4H316.4L319 1056V1069H306.8Z" fill="#eef3e6" stroke="#c9c9c9" stroke-width=".6"/><path d="M307.2 1062.2Q310 1060 313 1062.6T318.6 1061.4V1068.6H307.2Z" fill="#7fc53a"/><path d="M309.6 1062V1057.2Q310.6 1055.6 311.6 1057.2V1062" fill="none" stroke="#333" stroke-width=".9"/><path d="M313.6 1065.4L319.8 1054.2L321 1054.9L314.9 1066Z" fill="#f0b428" stroke="#a66a10" stroke-width=".4"/><path d="M319.8 1054.2L320.4 1053.2L321.6 1053.8L321 1054.9Z" fill="#d33"/>
<circle cx="351" cy="1060.8" r="7.4" fill="#e33b2e"/><path d="M351 1060.8L344.6 1057.1A7.4 7.4 0 0 0 350.6 1068.2L354.2 1062.6Z" fill="#2ba24c"/><path d="M351 1060.8L354.2 1062.6L350.6 1068.2A7.4 7.4 0 0 0 357.4 1057.1H351Z" fill="#fcc31e"/><circle cx="351" cy="1060.8" r="3.5" fill="#fff"/><circle cx="351" cy="1060.8" r="2.7" fill="#4a8af4"/>
<g fill="#2a9fe0"><circle cx="388" cy="1060.6" r="6.6"/><path d="M384 1066L388 1069.6L392 1066Z"/></g><g fill="#bfe4f8"><circle cx="388" cy="1057.4" r="1.6"/><circle cx="384.2" cy="1058.2" r="1.3"/><circle cx="391.8" cy="1058.2" r="1.3"/><path d="M386.2 1059.6H389.8V1065.6H386.2ZM383 1060.2H385.4V1064.6H383ZM390.6 1060.2H393V1064.6H390.6Z"/></g>
<path d="M417.2 1056.4Q417.2 1055.4 418.2 1055.4H424L425 1056.4H432Q433 1056.4 433 1057.4V1067.8H417.2Z" fill="#7da7dc"/><rect x="418" y="1058.4" width="14.2" height="8.4" fill="#05070a"/><path d="M419.4 1060.4L420.6 1061.2L419.4 1062" stroke="#3c6" stroke-width=".6" fill="none"/>
<path d="M465.6 1055L455 1064.6M465.6 1067.2L455 1057.6" stroke="#2a9df0" stroke-width="2.7" fill="none"/><path d="M464.6 1053.2L469.8 1055.4V1066.8L464.6 1069Z" fill="#1f8ee6"/>
<circle cx="497.4" cy="1061" r="7.6" fill="#f59a1e"/><circle cx="499.4" cy="1061" r="7.3" fill="#2c2358"/><path d="M492.6 1058.6H506.2M492.2 1061H506.6M492.6 1063.4H506.2" stroke="#d9d5ea" stroke-width="1.3"/>
<circle cx="536" cy="1061.2" r="7.5" fill="#ff6a1f"/><path d="M536 1053.8Q542 1053.5 543.4 1059.6Q543.6 1064 540 1067.4Q543 1063 541 1059Q540 1056 536 1053.8Z" fill="#ffd22e"/><circle cx="535.4" cy="1061" r="4.2" fill="#3a4fc4"/><path d="M531 1060.2Q533 1058.2 536 1059.4L534.8 1061.2L537.6 1062Q535.6 1064.6 532.2 1063.6Q530.6 1062.4 531 1060.2Z" fill="#ff8a1f"/><path d="M529 1058Q530 1054.6 533.6 1054Q531.4 1056 531.6 1058.2Z" fill="#e6361f"/>
<rect x="572" y="1056.4" width="9" height="9" fill="#fff"/><path d="M572.4 1056.8L576.6 1060.8L580.8 1056.8" stroke="#1a6fc9" stroke-width="1" fill="none"/><path d="M564.8 1054.8L574.6 1053V1069L564.8 1067.2Z" fill="#0f6fcf"/><text x="566.2" y="1064.4" font-family="Liberation Sans, sans-serif" font-weight="bold" font-size="9.5" fill="#fff">O</text>
<circle cx="616.4" cy="1057" r="1.5" fill="#7b83eb"/><path d="M615 1059H618.4V1063.6Q618.4 1065.8 616.6 1065.8H615Z" fill="#7b83eb"/><circle cx="611.7" cy="1055.6" r="2.3" fill="#7b83eb"/><path d="M608.4 1058.4H615.2V1064.4Q615.2 1068.3 611.8 1068.3Q608.4 1068.3 608.4 1064.4Z" fill="#5a62c8"/><rect x="601.8" y="1056.2" width="9.4" height="9.4" rx=".8" fill="#4a51b8"/><text x="603.9" y="1063.9" font-family="Liberation Sans, sans-serif" font-weight="bold" font-size="8" fill="#fff">T</text>
<circle cx="644.6" cy="1058.6" r="4.6" fill="#17a9e8"/><circle cx="649.4" cy="1063.6" r="4.6" fill="#17a9e8"/><circle cx="647" cy="1061.1" r="6.6" fill="#19b1f2" stroke="#bfe9fb" stroke-width=".7"/><text x="643.3" y="1065.2" font-family="Liberation Sans, sans-serif" font-weight="bold" font-size="11.5" fill="#fff">S</text>
<path d="M677 1054.4L680.4 1056.2Q684 1055 688 1056.4Q691.6 1058 691.4 1061.2Q691.4 1064.4 688 1065.8Q684 1067.2 680.4 1066L677 1068L677.8 1064.2Q676.4 1061.2 677.8 1058.2Z" fill="#d6232c"/><ellipse cx="684.6" cy="1061.2" rx="5.4" ry="3.6" fill="#fff"/><circle cx="682" cy="1061.2" r=".9" fill="#d6232c"/><circle cx="684.6" cy="1061.2" r=".9" fill="#d6232c"/><circle cx="687.2" cy="1061.2" r=".9" fill="#d6232c"/>
<rect x="714.6" y="1054.8" width="14.4" height="10" fill="#f2f6fa" stroke="#c9d2da" stroke-width=".8"/><path d="M715.6 1061L718.6 1058.4L721.6 1061.6L724.6 1058.4L727.8 1061" fill="none" stroke="#2f8fd6" stroke-width="1"/><path d="M719.6 1065.2H724L725.4 1067.8H718.2Z" fill="#bfc6cc"/><rect x="712.8" y="1059" width="1.6" height="9" fill="#c6ccd2"/><rect x="712.6" y="1059.6" width="2" height="2" fill="#3c3"/>
<rect x="749.8" y="1053" width="16.4" height="15.8" fill="#c9c9c9"/><rect x="751" y="1054.2" width="14" height="13.4" fill="#ededed"/><text x="752.8" y="1065" font-family="Liberation Sans, sans-serif" font-size="10.5" fill="#444">f</text><path d="M757.6 1058.4h1M759.4 1057.6h1.2" stroke="#888" stroke-width=".8"/><rect x="762" y="1057" width="2" height="2" fill="#e02020"/><rect x="762" y="1060" width="2" height="2" fill="#e02020"/><rect x="762" y="1063" width="2" height="2" fill="#e02020"/>
<rect x="794" y="1055.4" width="9" height="11.2" fill="#fff"/><path d="M797.4 1058H802M797.4 1060.2H802M797.4 1062.4H802M797.4 1064.6H802" stroke="#2b579a" stroke-width="1"/><path d="M787 1054.8L797 1053V1069L787 1067.2Z" fill="#2b579a"/><text x="788" y="1064" font-family="Liberation Sans, sans-serif" font-weight="bold" font-size="8" fill="#fff">W</text>
<rect x="831" y="1055.4" width="9" height="11.2" fill="#fff"/><circle cx="835.8" cy="1059.4" r="2.4" fill="none" stroke="#d24726" stroke-width="1"/><path d="M833 1063.4H838.6M833 1065.2H838.6" stroke="#d24726" stroke-width=".9"/><path d="M824 1054.8L834 1053V1069L824 1067.2Z" fill="#d24726"/><text x="826" y="1064.6" font-family="Liberation Sans, sans-serif" font-weight="bold" font-size="9.5" fill="#fff">P</text>
<path d="M861 1053H874.6L877.4 1055.8V1069H861Z" fill="#f58a1f"/><path d="M874.6 1053V1055.8H877.4Z" fill="#fbd2a0"/><path d="M872.6 1058.6Q870.6 1057 868.2 1057.8Q865.6 1059 865.8 1061.6Q866.2 1064.2 869 1064.4Q871.6 1064.2 872.2 1061.8Q870.6 1062.8 869.4 1061.6Q870.6 1059.6 872.6 1058.6Z" fill="#fff"/>
<circle cx="906.2" cy="1060.8" r="7.4" fill="#ee6a20"/><path d="M898.8 1065.4L902 1066.4L899.4 1068.6Z" fill="#ee6a20"/><path d="M901.6 1065.2L908.6 1058.2" stroke="#e8e8e8" stroke-width="2.4" stroke-linecap="round"/><path d="M907.4 1055.6Q910.4 1055.2 911.2 1058.2L909 1057.6L908 1058.8L908.8 1060.6Q906 1060.2 907.4 1055.6Z" fill="#e8e8e8"/>
<g fill="none" stroke="#fff" stroke-width="1.1"><circle cx="1617.6" cy="1058.4" r="2.7"/><path d="M1613.8 1065.4Q1614.2 1061.8 1617.6 1061.8"/><circle cx="1611.8" cy="1063.4" r="2.3"/><path d="M1607.8 1069.6Q1608.2 1066.2 1611.8 1066.2Q1615.2 1066.2 1615.8 1069.6"/></g>
<path d="M1639 1066L1645 1060L1651 1066" fill="none" stroke="#fff" stroke-width="1.3"/>
<rect x="1663.6" y="1060.4" width="12.4" height="7" fill="none" stroke="#fff" stroke-width="1"/><rect x="1665" y="1061.8" width="9.6" height="4.2" fill="#fff"/><path d="M1661 1059.4H1664.4V1061" fill="none" stroke="#fff" stroke-width="1"/><rect x="1676.4" y="1062.4" width="1.2" height="3" fill="#fff"/>
<path d="M1685.4 1060.4H1688.2L1691.6 1057V1068.4L1688.2 1065H1685.4Z" fill="none" stroke="#fff" stroke-width="1"/><path d="M1694 1060.2Q1695.6 1062.7 1694 1065.2M1696.4 1058.4Q1699 1062.7 1696.4 1067" fill="none" stroke="#fff" stroke-width="1"/><path d="M1698.8 1056.6Q1702.4 1062.7 1698.8 1068.8" fill="none" stroke="#777" stroke-width="1"/>
<g fill="none" stroke="#fff" stroke-width="1.1"><path d="M1712.4 1069.6Q1713.4 1058.6 1724.4 1058"/><path d="M1715.8 1069.6Q1716.6 1062 1724.4 1061.4" stroke="#bbb"/><path d="M1719.2 1069.6Q1719.8 1065.2 1724.4 1064.8" stroke="#999"/></g><circle cx="1723.2" cy="1068.4" r="1.3" fill="#fff"/>
<rect x="1733.6" y="1056.8" width="22" height="12" rx="1" fill="none" stroke="#fff" stroke-width="1.1"/><path d="M1736 1059.6H1753.4M1736 1062H1753.4" stroke="#fff" stroke-width="1" stroke-dasharray="1.2 1"/><path d="M1738 1065.6H1751.2" stroke="#fff" stroke-width="1"/>
<path d="M1879.4 1055.6H1894.4V1066.6H1889.4L1886.9 1070.2L1884.4 1066.6H1879.4Z" fill="#fff"/><path d="M1882 1058.6H1892M1882 1061H1892M1882 1063.4H1888.6" stroke="#07171d" stroke-width="1"/>
<path d="M1915.5 1046V1080" stroke="#5c666b" stroke-width="1"/>
</svg>
<div class="a seg" style="left:1564px;top:1056px;color:#fff;letter-spacing:-0.2px">Links</div>
<div class="a seg" style="left:1767px;top:1056px;color:#fff;letter-spacing:-0.9px">ENG</div>
<div class="a seg" style="left:1832px;top:1048px;color:#fff;letter-spacing:-0.8px;transform:translateX(-50%)">16:20</div>
<div class="a seg" style="left:1832.5px;top:1064px;color:#fff;letter-spacing:-0.3px;transform:translateX(-50%)">15/06/2020</div>

<div class="a" style="left:488px;top:204px;width:843px;height:700px;background:#f0f0f0;border:1px solid #686868;box-shadow:0 4px 15px 0 rgba(0,0,0,.27),0 0 3px rgba(0,0,0,.14)"></div>
<div class="a" style="left:489px;top:205px;width:841px;height:30px;background:#fff"></div>
<div class="a seg" style="left:518px;top:213px;letter-spacing:-0.06px">New fax job</div>
<svg style="left:1210px;top:213px" width="12" height="12" viewBox="0 0 12 12"><path d="M1 6.5h10" stroke="#000" stroke-width="1"/></svg>
<svg style="left:1255px;top:213px" width="12" height="12" viewBox="0 0 12 12"><rect x="1.5" y="1.5" width="9" height="9" stroke="#000" fill="none" stroke-width="1"/></svg>
<svg style="left:1301px;top:213px" width="12" height="12" viewBox="0 0 12 12"><path d="M1 1l10 10M11 1L1 11" stroke="#000" stroke-width="1.1"/></svg>
<div class="a" style="left:489px;top:235px;width:841px;height:24px;background:linear-gradient(90deg,#f0f0f0 0,#fcfcfc 100%)"></div>
<div class="a seg" style="left:503.5px;top:240px;letter-spacing:-0.15px"><u>F</u>ile</div>
<div class="a seg" style="left:541px;top:240px;letter-spacing:-0.15px"><u>E</u>dit</div>
<div class="a seg" style="left:580px;top:240px;letter-spacing:-0.12px"><u>R</u>ecipient</div>
<div class="a seg" style="left:648px;top:240px;letter-spacing:-0.15px"><u>T</u>ools</div>
<div class="a seg" style="left:695px;top:240px;letter-spacing:0px"><u>?</u></div>
<div class="a" style="left:489px;top:259px;width:841px;height:55px;background:linear-gradient(180deg,#fdfdfd 0,#f9f9f9 45%,#f5f5f5 78%,#efefef 100%)"></div>
<div class="a" style="left:564px;top:265px;width:1px;height:45px;background:#bdbdbd"></div>
<div class="a" style="left:649px;top:265px;width:1px;height:45px;background:#bdbdbd"></div>
<div class="a" style="left:729px;top:265px;width:1px;height:45px;background:#bdbdbd"></div>
<div class="a" style="left:949px;top:265px;width:1px;height:45px;background:#bdbdbd"></div>
<div class="a seg" style="left:523px;top:296px;letter-spacing:0px;transform:translateX(-50%)">Archive</div>
<div class="a seg" style="left:605.5px;top:296px;letter-spacing:-0.55px;transform:translateX(-50%)">Show Fax</div>
<div class="a seg" style="left:688px;top:296px;letter-spacing:-0.3px;transform:translateX(-50%)">Load</div>
<div class="a seg" style="left:768.2px;top:296px;letter-spacing:-0.9px;transform:translateX(-50%)">Save</div>
<div class="a seg" style="left:838.7px;top:296px;letter-spacing:-0.37px;transform:translateX(-50%);color:#8d8d8d">Remove</div>
<div class="a seg" style="left:908px;top:296px;letter-spacing:-0.28px;transform:translateX(-50%)">Remove all</div>
<div class="a seg" style="left:988.7px;top:296px;letter-spacing:-0.17px;transform:translateX(-50%)">Blacklist</div>
<svg style="left:489px;top:205px" width="600" height="110" viewBox="489 205 600 110">
<defs>
<linearGradient id="dPur" x1="0" y1="0" x2="1" y2="0"><stop offset="0" stop-color="#c7a1df"/><stop offset="0.12" stop-color="#a66fcb"/><stop offset="0.85" stop-color="#9a5fc2"/><stop offset="1" stop-color="#8348a8"/></linearGradient>
<linearGradient id="dSil" x1="0" y1="0" x2="1" y2="1"><stop offset="0" stop-color="#e9e9ee"/><stop offset="0.55" stop-color="#8e8e98"/><stop offset="1" stop-color="#c9c9d2"/></linearGradient>
<linearGradient id="dFol" x1="0" y1="0" x2="1" y2="1"><stop offset="0" stop-color="#fcefb0"/><stop offset="1" stop-color="#eccb5c"/></linearGradient>
<linearGradient id="dFol2" x1="0" y1="0" x2="1" y2="0"><stop offset="0" stop-color="#f8e69a"/><stop offset="1" stop-color="#f3d874"/></linearGradient>
<radialGradient id="dLens" cx=".4" cy=".35" r=".7"><stop offset="0" stop-color="#f3f8ff"/><stop offset="1" stop-color="#c3d7f3"/></radialGradient>
<linearGradient id="dGr" x1="0.3" y1="0" x2="0.5" y2="1"><stop offset="0" stop-color="#b4d0b8"/><stop offset=".55" stop-color="#86b594"/><stop offset="1" stop-color="#5a9a74"/></linearGradient>
<radialGradient id="dOr" cx=".4" cy=".35" r=".7"><stop offset="0" stop-color="#ffd27a"/><stop offset="1" stop-color="#f09a1e"/></radialGradient>
<radialGradient id="dRed" cx=".4" cy=".3" r=".8"><stop offset="0" stop-color="#ff6a5a"/><stop offset="1" stop-color="#c60c0c"/></radialGradient>
</defs>
<!-- title fax icon -->
<path d="M497 219.5L505 215.5L512.4 218L504.8 222.6Z" fill="#c9cdd2" stroke="#8e9298" stroke-width=".6"/>
<path d="M497 219.5V221.3L504.8 224.6V222.6Z" fill="#9a9ea4"/><path d="M504.8 222.6L512.4 218V219.8L504.8 224.6Z" fill="#b3b7bc"/>
<path d="M502.2 217L504.4 212.2L510 213.4L508.6 218.2Z" fill="#fdfdfd" stroke="#b8b8b8" stroke-width=".5"/>
<path d="M501.4 218.8L506.6 220.4" stroke="#5fbf4a" stroke-width="1.1"/>
<!-- Archive -->
<path d="M528.5 287L537.5 285.5L529.5 294.5Z" fill="#bdbdbd" opacity=".55"/>
<path d="M519 264.6L526.5 262.8L533.8 264.2V271.5L519 273Z" fill="#5aa868"/><path d="M519 264.6L526.5 262.8L527.5 263.4L520.4 265.2Z" fill="#2f7f3f"/>
<path d="M531.6 264V271.6L533.8 271V264.2Z" fill="#e8e6d8"/>
<path d="M516 266L523 264.4L529.6 265.6V273H516Z" fill="#4a5eb4"/><path d="M516 266L523 264.4L524 264.9L517.4 266.4Z" fill="#2c3c8a"/>
<path d="M527.6 265.8L529.6 265.6V273.4L527.6 274Z" fill="#dfe2f2"/>
<path d="M513.2 267.4L515.6 266.2L528 266.4V274.6L513.2 274.4Z" fill="#b4475f"/>
<path d="M513.2 267.4L515.6 266.2V274.4H513.2Z" fill="#7e2238"/>
<path d="M515.6 266.2L528 266.4V268.6L515.6 268.4Z" fill="#c7647a" opacity=".8"/>
<path d="M512 273.2L528.1 274.6V294.6L512 290.5Z" fill="#f3f4f8" stroke="#d2d6dc" stroke-width=".4"/>
<path d="M512.4 275.8L519.6 275.2C522 280.5 524.5 287.5 526.4 293.9L512.3 290.3Z" fill="url(#dGr)"/>
<path d="M528.1 274.6L533.9 269.8V291.6L528.1 294.6Z" fill="#d2d2ea" stroke="#bcbcd8" stroke-width=".4"/>
<path d="M529.2 277.6L532.8 274.8M529.2 280.2L532.8 277.4M529.2 282.8L532.8 280" stroke="#f0f0fa" stroke-width=".8"/>
<circle cx="523.2" cy="280.5" r="4.2" fill="url(#dOr)"/>
<!-- Show Fax -->
<path d="M595 263.5H612.5L618.5 269.5V293H595Z" fill="#fdfdfd" stroke="#c4c4c4" stroke-width="1"/>
<path d="M612.5 263.5V269.5H618.5Z" fill="#f0f0f0" stroke="#c4c4c4" stroke-width=".8"/>
<path d="M600 284.8L593.8 292.8" stroke="#8f8f8f" stroke-width="2.8" stroke-linecap="round"/><path d="M600 284.6L594 292.4" stroke="#d0d0d0" stroke-width="1" stroke-linecap="round"/>
<circle cx="604.7" cy="279.1" r="7" fill="url(#dLens)" stroke="#848a92" stroke-width="1.4"/>
<path d="M600.5 277.5Q602.5 273.5 607 274" fill="none" stroke="#fff" stroke-width="1.2" opacity=".9"/>
<!-- Load -->
<ellipse cx="697" cy="290" rx="6" ry="3.2" fill="#cfcfcf" opacity=".6"/>
<path d="M682 265.5L694.8 266.5V291.5L682 291.5Z" fill="url(#dFol2)" stroke="#e0c060" stroke-width=".6"/>
<path d="M675.4 263.4L678 263.2L683.2 268.2V289.2L680.6 294.2L675.4 288Z" fill="url(#dFol)" stroke="#dcbc5c" stroke-width=".7"/>
<rect x="693.6" y="283.5" width="1" height="5" fill="#fff"/><rect x="693.6" y="288" width="1" height="1.6" fill="#3a9fe0"/>
<path d="M684.4 275.6H690.6V272L698 278.4L690.6 284.8V281.6H684.4Z" fill="#4fd24a" stroke="#3ab83a" stroke-width=".8" stroke-linejoin="round"/>
<!-- Save -->
<path d="M753 265Q753 263 755 263H782.7Q784.7 263 784.7 265V292.3Q784.7 294.3 782.7 294.3H755.5L753 291.8Z" fill="url(#dPur)"/>
<rect x="757" y="263" width="23.4" height="18" fill="#fff"/>
<rect x="757" y="263" width="23.4" height="2.6" fill="#d2d5de"/>
<path d="M757 268.5H780.4M757 271.5H780.4M757 274.5H780.4M757 277.5H780.4" stroke="#c5cbe0" stroke-width="1"/>
<rect x="754.3" y="265.3" width="1.3" height="1.3" fill="#f0e6f8"/><rect x="782" y="265.3" width="1.3" height="1.3" fill="#f0e6f8"/>
<rect x="761" y="283.7" width="16.4" height="10.6" fill="url(#dSil)"/>
<rect x="763.4" y="285" width="3.6" height="7.6" fill="#9657bd"/>
<rect x="779" y="283.7" width="1.6" height="10.6" fill="#8347a6"/>
<!-- Remove (disabled) -->
<g fill="#b2b2b2" transform="translate(379,215.06) scale(.98,.955)"><path d="M484.4 52.4C474 55 461 67 455.6 76.5C454 79.6 454.8 82.2 457.2 81.9C459.8 81.5 459.8 79 461 76.8C466 70 476 60 484.4 52.4Z"/><path d="M453.4 55.6C454 54 456.5 54.4 458.5 56C466 61.6 474 69 479.8 78.8C470.5 70.5 462.5 62.4 455 58.4C453.6 57.6 453 56.6 453.4 55.6Z"/></g>
<!-- Remove all -->
<g fill="#d8321f" stroke="#c02a18" stroke-width=".5" transform="translate(567.3,229) scale(.72)"><path d="M484.4 52.4C474 55 461 67 455.6 76.5C454 79.6 454.8 82.2 457.2 81.9C459.8 81.5 459.8 79 461 76.8C466 70 476 60 484.4 52.4Z"/><path d="M453.4 55.6C454 54 456.5 54.4 458.5 56C466 61.6 474 69 479.8 78.8C470.5 70.5 462.5 62.4 455 58.4C453.6 57.6 453 56.6 453.4 55.6Z"/></g>
<g fill="#d8321f" stroke="#c02a18" stroke-width=".5" transform="translate(576,234) scale(.72)"><path d="M484.4 52.4C474 55 461 67 455.6 76.5C454 79.6 454.8 82.2 457.2 81.9C459.8 81.5 459.8 79 461 76.8C466 70 476 60 484.4 52.4Z"/><path d="M453.4 55.6C454 54 456.5 54.4 458.5 56C466 61.6 474 69 479.8 78.8C470.5 70.5 462.5 62.4 455 58.4C453.6 57.6 453 56.6 453.4 55.6Z"/></g>
<!-- Blacklist -->
<rect x="976.2" y="266.4" width="27.6" height="22.4" rx="1" fill="#000" opacity=".10"/>
<rect x="975.5" y="265.5" width="27.4" height="22.2" rx=".8" fill="#fdfdfd" stroke="#858b96" stroke-width="1"/>
<rect x="976" y="266" width="26.4" height="2" fill="#dde3ee"/>
<path d="M996 266.8h1.2M998 266.8h1.2M1000 266.8h1.2" stroke="#3c4c7c" stroke-width="1.2"/>
<path d="M978.2 271.5H994.6M978.2 273.5H994.6M978.2 275.5H994.6M978.2 277.5H994.6M978.2 279.5H994.6M978.2 281.5H994.6M978.2 283.5H994.6" stroke="#c4c4c4" stroke-width=".8"/>
<text x="995.6" y="284.4" font-family="Liberation Sans, sans-serif" font-weight="bold" font-size="18" fill="#ec9414">!</text>
<circle cx="982.9" cy="285" r="8.1" fill="#fff" fill-opacity=".82" stroke="url(#dRed)" stroke-width="3.6"/>
<path d="M977.3 279.4L988.5 290.6" stroke="#d81818" stroke-width="3.3"/>
</svg>

<div class="a tr" style="right:1354px;top:332px;letter-spacing:-0.19px"><u>S</u>end:</div>
<div class="a" style="left:574px;top:328px;width:81px;height:21px;background:#e1e1e1;border:1px solid #adadad"></div>
<div class="a tr" style="left:578px;top:332px;letter-spacing:-0.1px">Now</div>
<svg style="left:641px;top:335px" width="10" height="6" viewBox="0 0 10 6"><path d="M.8 .8L5 5L9.2 .8" fill="none" stroke="#444" stroke-width="1.1"/></svg>
<div class="a tr" style="right:1352px;top:359px;letter-spacing:-0.2px"><u>D</u>escription:</div>
<div class="a" style="left:574px;top:353px;width:283px;height:20px;background:#fff;border:1px solid #7a7a7a"></div>
<div class="a tr" style="left:577.4px;top:357px;letter-spacing:-0.15px">Marketingaktion 06.2020</div>
<div class="a tr" style="right:1354px;top:380px;letter-spacing:-0.21px"><u>B</u>illing code:</div>
<div class="a" style="left:574px;top:376px;width:283px;height:21px;background:#fff;border:1px solid #7a7a7a"></div>
<div class="a tr" style="left:577.4px;top:380px;letter-spacing:-0.28px">MKTG1001</div>
<svg style="left:843px;top:384px" width="10" height="6" viewBox="0 0 10 6"><path d="M.8 .8L5 5L9.2 .8" fill="none" stroke="#444" stroke-width="1.1"/></svg>
<div class="a" style="left:894px;top:333px;width:13px;height:13px;background:#fff;border:1px solid #333"></div>
<div class="a" style="left:1029px;top:333px;width:13px;height:13px;background:#fff;border:1px solid #333"></div>
<div class="a" style="left:894px;top:354.5px;width:13px;height:13px;background:#fff;border:1px solid #333"></div>
<div class="a tr" style="left:913.5px;top:333.5px;letter-spacing:-0.19px">Use <u>c</u>over sheet</div>
<div class="a tr" style="left:1048.4px;top:333.5px;letter-spacing:-0.53px">E<u>x</u>press</div>
<div class="a tr" style="left:913.5px;top:354.5px;letter-spacing:-0.25px">Save as <u>d</u>raft</div>
<div class="a" style="left:492px;top:409px;width:414px;height:59px;border:1px solid #dcdcdc"></div>
<div class="a" style="left:499px;top:404px;width:65px;height:12px;background:#f0f0f0"></div>
<div class="a tr" style="left:501px;top:404px;letter-spacing:-0.26px">Manual entry</div>
<div class="a tr" style="left:503px;top:423px;letter-spacing:-0.38px">Fax num<u>b</u>er:</div>
<div class="a tr" style="left:687.4px;top:423px;letter-spacing:-0.3px"><u>C</u>omment:</div>
<div class="a" style="left:500px;top:438px;width:181px;height:20px;background:#fff;border:1px solid #7a7a7a"></div>
<div class="a" style="left:685px;top:438px;width:181px;height:20px;background:#fff;border:1px solid #7a7a7a"></div>
<div class="a" style="left:874px;top:436px;width:23px;height:23px;background:#cccccc;border:1px solid #bfbfbf"></div>
<svg style="left:880px;top:442px" width="11" height="11" viewBox="0 0 11 11"><path d="M4.5 1.5h2v3h3v2h-3v3h-2v-3h-3v-2h3z" fill="#b9b9b9" stroke="#8e8e8e" stroke-width=".8"/></svg>
<div class="a" style="left:492px;top:492px;width:412px;height:353px;background:#fff;border:1px solid #dcdcdc"></div>
<div class="a" style="left:598px;top:474px;width:47px;height:18px;background:#f0f0f0;border:1px solid #d9d9d9;border-bottom:none"></div>
<div class="a" style="left:644px;top:474px;width:41px;height:18px;background:#f0f0f0;border:1px solid #d9d9d9;border-bottom:none"></div>
<div class="a" style="left:492px;top:472px;width:106px;height:21px;background:#fff;border:1px solid #dcdcdc;border-bottom:none"></div>
<div class="a tr" style="left:500px;top:476px;letter-spacing:-0.3px">List loaded from file</div>
<div class="a tr" style="left:601.5px;top:478px;letter-spacing:-0.27px">Outlook</div>
<div class="a tr" style="left:650.5px;top:478px;letter-spacing:-0.44px">ODBC</div>
<div class="a" style="left:499px;top:497px;width:363px;height:325px;background:#fff;border:1px solid #828790"></div>
<div class="a" style="left:500px;top:498px;width:361px;height:323px;overflow:hidden">
<div class="a tr" style="left:7.399999999999977px;top:7px;letter-spacing:-0.43px">Fax number</div>
<div class="a tr" style="left:176.79999999999995px;top:7px;letter-spacing:-0.63px">Comment</div>
<div class="a" style="left:170px;top:1px;width:1px;height:23px;background:#e5e5e5"></div>
<div class="a" style="left:340px;top:1px;width:1px;height:23px;background:#e5e5e5"></div>
<div class="a tr" style="left:6.7999999999999545px;top:27px;letter-spacing:-0.14px">+49890100000000</div>
<div class="a tr" style="left:177.39999999999998px;top:27px;letter-spacing:-0.1px">Recipient 1</div>
<div class="a tr" style="left:6.7999999999999545px;top:44px;letter-spacing:-0.14px">+49890200000000</div>
<div class="a tr" style="left:177.39999999999998px;top:44px;letter-spacing:-0.1px">Recipient 2</div>
<div class="a tr" style="left:6.7999999999999545px;top:61px;letter-spacing:-0.14px">+49890300000000</div>
<div class="a tr" style="left:177.39999999999998px;top:61px;letter-spacing:-0.1px">Recipient 3</div>
<div class="a tr" style="left:6.7999999999999545px;top:78px;letter-spacing:-0.14px">+49890400000000</div>
<div class="a tr" style="left:177.39999999999998px;top:78px;letter-spacing:-0.1px">Recipient 4</div>
<div class="a tr" style="left:6.7999999999999545px;top:95px;letter-spacing:-0.14px">+49890500000000</div>
<div class="a tr" style="left:177.39999999999998px;top:95px;letter-spacing:-0.1px">Recipient 5</div>
<div class="a tr" style="left:6.7999999999999545px;top:112px;letter-spacing:-0.14px">+49890600000000</div>
<div class="a tr" style="left:177.39999999999998px;top:112px;letter-spacing:-0.1px">Recipient 6</div>
<div class="a tr" style="left:6.7999999999999545px;top:129px;letter-spacing:-0.14px">+49890700000000</div>
<div class="a tr" style="left:177.39999999999998px;top:129px;letter-spacing:-0.1px">Recipient 7</div>
<div class="a tr" style="left:6.7999999999999545px;top:146px;letter-spacing:-0.14px">+49890800000000</div>
<div class="a tr" style="left:177.39999999999998px;top:146px;letter-spacing:-0.1px">Recipient 8</div>
<div class="a tr" style="left:6.7999999999999545px;top:163px;letter-spacing:-0.14px">+49890900000000</div>
<div class="a tr" style="left:177.39999999999998px;top:163px;letter-spacing:-0.1px">Recipient 9</div>
<div class="a tr" style="left:6.7999999999999545px;top:180px;letter-spacing:-0.14px">+49891000000000</div>
<div class="a tr" style="left:177.39999999999998px;top:180px;letter-spacing:-0.1px">Recipient 10</div>
<div class="a tr" style="left:6.7999999999999545px;top:197px;letter-spacing:-0.14px">+49891100000000</div>
<div class="a tr" style="left:177.39999999999998px;top:197px;letter-spacing:-0.1px">Recipient 11</div>
<div class="a tr" style="left:6.7999999999999545px;top:214px;letter-spacing:-0.14px">+49891200000000</div>
<div class="a tr" style="left:177.39999999999998px;top:214px;letter-spacing:-0.1px">Recipient 12</div>
<div class="a tr" style="left:6.7999999999999545px;top:231px;letter-spacing:-0.14px">+49891300000000</div>
<div class="a tr" style="left:177.39999999999998px;top:231px;letter-spacing:-0.1px">Recipient 13</div>
<div class="a tr" style="left:6.7999999999999545px;top:248px;letter-spacing:-0.14px">+49891400000000</div>
<div class="a tr" style="left:177.39999999999998px;top:248px;letter-spacing:-0.1px">Recipient 14</div>
<div class="a tr" style="left:6.7999999999999545px;top:265px;letter-spacing:-0.14px">+49891500000000</div>
<div class="a tr" style="left:177.39999999999998px;top:265px;letter-spacing:-0.1px">Recipient 15</div>
<div class="a tr" style="left:6.7999999999999545px;top:282px;letter-spacing:-0.14px">+49891600000000</div>
<div class="a tr" style="left:177.39999999999998px;top:282px;letter-spacing:-0.1px">Recipient 16</div>
<div class="a tr" style="left:6.7999999999999545px;top:299px;letter-spacing:-0.14px">+49891700000000</div>
<div class="a tr" style="left:177.39999999999998px;top:299px;letter-spacing:-0.1px">Recipient 17</div>
<div class="a tr" style="left:6.7999999999999545px;top:316px;letter-spacing:-0.14px">+49891800000000</div>
<div class="a tr" style="left:177.39999999999998px;top:316px;letter-spacing:-0.1px">Recipient 18</div>
<div class="a" style="left:344px;top:1px;width:16px;height:321px;background:#f0f0f0"></div>
<div class="a" style="left:344px;top:18px;width:15px;height:139px;background:#cdcdcd"></div>
<svg style="left:347px;top:6px" width="9" height="7" viewBox="0 0 9 7"><path d="M1 5.6L4.5 2L8 5.6" fill="none" stroke="#484848" stroke-width="1.7"/></svg>
<svg style="left:347px;top:311px" width="9" height="7" viewBox="0 0 9 7"><path d="M1 1.4L4.5 5L8 1.4" fill="none" stroke="#484848" stroke-width="1.7"/></svg>
</div>
<div class="a" style="left:870px;top:498px;width:23px;height:23px;background:#e1e1e1;border:1px solid #adadad"></div>
<div class="a" style="left:870px;top:564px;width:23px;height:23px;background:#cccccc;border:1px solid #bfbfbf"></div>
<svg style="left:876px;top:570px" width="11" height="11" viewBox="0 0 11 11"><path d="M4.5 1.5h2v3h3v2h-3v3h-2v-3h-3v-2h3z" fill="#b9b9b9" stroke="#8e8e8e" stroke-width=".8"/></svg>
<div class="a" style="left:870px;top:596px;width:23px;height:23px;background:#e1e1e1;border:2px solid #0078d7"></div>
<svg style="left:873px;top:599px" width="17" height="17" viewBox="0 0 17 17"><path d="M4 1.5h2.2v2.6h2.6v2.2h-2.6v2.6h-2.2v-2.6h-2.6v-2.2h2.6z" fill="#6f8ee8" stroke="#1f3fb0" stroke-width=".9"/><path d="M10.6 7.8h2.2v2.6h2.6v2.2h-2.6v2.6h-2.2v-2.6h-2.6v-2.2h2.6z" fill="#6f8ee8" stroke="#1f3fb0" stroke-width=".9"/></svg>
<svg style="left:875px;top:502px" width="14" height="17" viewBox="0 0 14 17"><path d="M.5 .5H9.5L12.5 3.5V15.5H.5Z" fill="#fff" stroke="#9a9a9a" stroke-width="1"/><path d="M.5 15.5H12.5" stroke="#555" stroke-width="1.2"/><path d="M4.2 4.2H12.2V13C12.2 15 10.5 16 8 15.8C9.6 14.5 9.8 12.5 8.4 12.6H4.2Z" fill="#3aa83a"/><path d="M5 5H9V11H5Z" fill="#b9e89a" opacity=".7"/></svg>
<div class="a tr" style="left:502.5px;top:824px;letter-spacing:-0.35px">Entries:</div>
<div class="a tr" style="right:1064.5px;top:824px;letter-spacing:-0.14px">0 of 35 selected</div>
<div class="a" style="left:913px;top:409px;width:414px;height:436px;border:1px solid #dcdcdc"></div>
<div class="a" style="left:920px;top:404px;width:79px;height:12px;background:#f0f0f0"></div>
<div class="a tr" style="left:922px;top:404px;letter-spacing:-0.29px">Fax recipient list</div>
<div class="a" style="left:921px;top:419px;width:366px;height:404px;background:#fff;border:1px solid #828790"></div>
<div class="a" style="left:922px;top:420px;width:364px;height:402px;overflow:hidden">
<div class="a tr" style="left:7.2999999999999545px;top:7px;letter-spacing:-0.43px">Fax number</div>
<div class="a tr" style="left:178.5px;top:7px;letter-spacing:-0.63px">Comment</div>
<div class="a" style="left:172px;top:1px;width:1px;height:23px;background:#e5e5e5"></div>
<div class="a" style="left:343px;top:1px;width:1px;height:23px;background:#e5e5e5"></div>
<div class="a tr" style="left:6.699999999999932px;top:28px;letter-spacing:-0.14px">+49890100000000</div>
<div class="a tr" style="left:179.0999999999999px;top:28px;letter-spacing:-0.1px">Recipient 1</div>
<div class="a tr" style="left:6.699999999999932px;top:45px;letter-spacing:-0.14px">+49890200000000</div>
<div class="a tr" style="left:179.0999999999999px;top:45px;letter-spacing:-0.1px">Recipient 2</div>
<div class="a tr" style="left:6.699999999999932px;top:62px;letter-spacing:-0.14px">+49890300000000</div>
<div class="a tr" style="left:179.0999999999999px;top:62px;letter-spacing:-0.1px">Recipient 3</div>
<div class="a tr" style="left:6.699999999999932px;top:79px;letter-spacing:-0.14px">+49890400000000</div>
<div class="a tr" style="left:179.0999999999999px;top:79px;letter-spacing:-0.1px">Recipient 4</div>
<div class="a tr" style="left:6.699999999999932px;top:96px;letter-spacing:-0.14px">+49890500000000</div>
<div class="a tr" style="left:179.0999999999999px;top:96px;letter-spacing:-0.1px">Recipient 5</div>
<div class="a tr" style="left:6.699999999999932px;top:113px;letter-spacing:-0.14px">+49890600000000</div>
<div class="a tr" style="left:179.0999999999999px;top:113px;letter-spacing:-0.1px">Recipient 6</div>
<div class="a tr" style="left:6.699999999999932px;top:130px;letter-spacing:-0.14px">+49890700000000</div>
<div class="a tr" style="left:179.0999999999999px;top:130px;letter-spacing:-0.1px">Recipient 7</div>
<div class="a tr" style="left:6.699999999999932px;top:147px;letter-spacing:-0.14px">+49890800000000</div>
<div class="a tr" style="left:179.0999999999999px;top:147px;letter-spacing:-0.1px">Recipient 8</div>
<div class="a tr" style="left:6.699999999999932px;top:164px;letter-spacing:-0.14px">+49890900000000</div>
<div class="a tr" style="left:179.0999999999999px;top:164px;letter-spacing:-0.1px">Recipient 9</div>
<div class="a tr" style="left:6.699999999999932px;top:181px;letter-spacing:-0.14px">+49891000000000</div>
<div class="a tr" style="left:179.0999999999999px;top:181px;letter-spacing:-0.1px">Recipient 10</div>
<div class="a tr" style="left:6.699999999999932px;top:198px;letter-spacing:-0.14px">+49891100000000</div>
<div class="a tr" style="left:179.0999999999999px;top:198px;letter-spacing:-0.1px">Recipient 11</div>
<div class="a tr" style="left:6.699999999999932px;top:215px;letter-spacing:-0.14px">+49891200000000</div>
<div class="a tr" style="left:179.0999999999999px;top:215px;letter-spacing:-0.1px">Recipient 12</div>
<div class="a tr" style="left:6.699999999999932px;top:232px;letter-spacing:-0.14px">+49891300000000</div>
<div class="a tr" style="left:179.0999999999999px;top:232px;letter-spacing:-0.1px">Recipient 13</div>
<div class="a tr" style="left:6.699999999999932px;top:249px;letter-spacing:-0.14px">+49891400000000</div>
<div class="a tr" style="left:179.0999999999999px;top:249px;letter-spacing:-0.1px">Recipient 14</div>
<div class="a tr" style="left:6.699999999999932px;top:266px;letter-spacing:-0.14px">+49891500000000</div>
<div class="a tr" style="left:179.0999999999999px;top:266px;letter-spacing:-0.1px">Recipient 15</div>
<div class="a tr" style="left:6.699999999999932px;top:283px;letter-spacing:-0.14px">+49891600000000</div>
<div class="a tr" style="left:179.0999999999999px;top:283px;letter-spacing:-0.1px">Recipient 16</div>
<div class="a tr" style="left:6.699999999999932px;top:300px;letter-spacing:-0.14px">+49891700000000</div>
<div class="a tr" style="left:179.0999999999999px;top:300px;letter-spacing:-0.1px">Recipient 17</div>
<div class="a tr" style="left:6.699999999999932px;top:317px;letter-spacing:-0.14px">+49891800000000</div>
<div class="a tr" style="left:179.0999999999999px;top:317px;letter-spacing:-0.1px">Recipient 18</div>
<div class="a tr" style="left:6.699999999999932px;top:334px;letter-spacing:-0.14px">+49891900000000</div>
<div class="a tr" style="left:179.0999999999999px;top:334px;letter-spacing:-0.1px">Recipient 19</div>
<div class="a tr" style="left:6.699999999999932px;top:351px;letter-spacing:-0.14px">+49892000000000</div>
<div class="a tr" style="left:179.0999999999999px;top:351px;letter-spacing:-0.1px">Recipient 20</div>
<div class="a tr" style="left:6.699999999999932px;top:368px;letter-spacing:-0.14px">+49892100000000</div>
<div class="a tr" style="left:179.0999999999999px;top:368px;letter-spacing:-0.1px">Recipient 21</div>
<div class="a tr" style="left:6.699999999999932px;top:385px;letter-spacing:-0.14px">+49892200000000</div>
<div class="a tr" style="left:179.0999999999999px;top:385px;letter-spacing:-0.1px">Recipient 22</div>
<div class="a tr" style="left:6.699999999999932px;top:402px;letter-spacing:-0.14px">+49892300000000</div>
<div class="a tr" style="left:179.0999999999999px;top:402px;letter-spacing:-0.1px">Recipient 23</div>
<div class="a" style="left:347px;top:1px;width:16px;height:400px;background:#f0f0f0"></div>
<div class="a" style="left:347px;top:18px;width:15px;height:229px;background:#cdcdcd"></div>
<svg style="left:350px;top:6px" width="9" height="7" viewBox="0 0 9 7"><path d="M1 5.6L4.5 2L8 5.6" fill="none" stroke="#484848" stroke-width="1.7"/></svg>
<svg style="left:350px;top:390px" width="9" height="7" viewBox="0 0 9 7"><path d="M1 1.4L4.5 5L8 1.4" fill="none" stroke="#484848" stroke-width="1.7"/></svg>
</div>
<div class="a" style="left:1295px;top:420px;width:23px;height:23px;background:#e1e1e1;border:1px solid #adadad"></div>
<div class="a" style="left:1295px;top:452px;width:23px;height:23px;background:#cccccc;border:1px solid #bfbfbf"></div>
<div class="a" style="left:1295px;top:484px;width:23px;height:23px;background:#e1e1e1;border:1px solid #adadad"></div>
<svg style="left:1295px;top:420px" width="23" height="88" viewBox="1295 420 23 88"><g transform="translate(922.5,292.4) scale(.5)"><path d="M753 265Q753 263 755 263H782.7Q784.7 263 784.7 265V292.3Q784.7 294.3 782.7 294.3H755.5L753 291.8Z" fill="url(#dPur)"/><rect x="757" y="263" width="23.4" height="18" fill="#fff"/><rect x="757" y="263" width="23.4" height="2.6" fill="#d2d5de"/><path d="M757 268.5H780.4M757 272.5H780.4M757 276.5H780.4" stroke="#c5cbe0" stroke-width="1.6"/><rect x="761" y="283.7" width="16.4" height="10.6" fill="url(#dSil)"/><rect x="763.4" y="285" width="3.6" height="7.6" fill="#9657bd"/><rect x="779" y="283.7" width="1.6" height="10.6" fill="#8347a6"/></g><g fill="#9b9b9b" transform="translate(1072.8,430.8) scale(.5)"><path d="M484.4 52.4C474 55 461 67 455.6 76.5C454 79.6 454.8 82.2 457.2 81.9C459.8 81.5 459.8 79 461 76.8C466 70 476 60 484.4 52.4Z"/><path d="M453.4 55.6C454 54 456.5 54.4 458.5 56C466 61.6 474 69 479.8 78.8C470.5 70.5 462.5 62.4 455 58.4C453.6 57.6 453 56.6 453.4 55.6Z"/></g><g transform="translate(852.45,355.1) scale(.5)"><g fill="#d8321f" stroke="#c02a18" stroke-width=".5" transform="translate(567.3,229) scale(.72)"><path d="M484.4 52.4C474 55 461 67 455.6 76.5C454 79.6 454.8 82.2 457.2 81.9C459.8 81.5 459.8 79 461 76.8C466 70 476 60 484.4 52.4Z"/><path d="M453.4 55.6C454 54 456.5 54.4 458.5 56C466 61.6 474 69 479.8 78.8C470.5 70.5 462.5 62.4 455 58.4C453.6 57.6 453 56.6 453.4 55.6Z"/></g><g fill="#d8321f" stroke="#c02a18" stroke-width=".5" transform="translate(576,234) scale(.72)"><path d="M484.4 52.4C474 55 461 67 455.6 76.5C454 79.6 454.8 82.2 457.2 81.9C459.8 81.5 459.8 79 461 76.8C466 70 476 60 484.4 52.4Z"/><path d="M453.4 55.6C454 54 456.5 54.4 458.5 56C466 61.6 474 69 479.8 78.8C470.5 70.5 462.5 62.4 455 58.4C453.6 57.6 453 56.6 453.4 55.6Z"/></g></g></svg>
<div class="a tr" style="left:924.3px;top:827px;letter-spacing:-0.14px">Recipient:</div>
<div class="a tr" style="right:637.5px;top:827px;letter-spacing:-0.14px">0 of 35 selected</div>
<div class="a" style="left:1123px;top:854px;width:95px;height:23px;background:#e1e1e1;border:1px solid #adadad"></div>
<div class="a tr" style="left:1169px;top:860px;letter-spacing:-0.29px;transform:translateX(-50%)">Cancel</div>
<div class="a" style="left:1226px;top:854px;width:91px;height:23px;background:#e1e1e1;border:1px solid #adadad"></div>
<div class="a tr" style="left:1266.3px;top:860px;letter-spacing:-0.49px">Send</div>
<svg style="left:1246px;top:858px" width="17" height="15" viewBox="0 0 17 15"><path d="M1.5 7.2L10.5 5L15 7.6L6 10.4Z" fill="#d6d6d6" stroke="#9a9a9a" stroke-width=".6"/><path d="M5.5 5.8L8 1L13.4 2.6L12 6.4Z" fill="#fafafa" stroke="#b5b5b5" stroke-width=".5"/><path d="M1.5 7.2L6 10.4V12L1.5 9Z" fill="#aaa"/><path d="M6 10.4L15 7.6V9.4L6 12Z" fill="#bdbdbd"/><path d="M8 9.6H11.4V7.6L15.6 11L11.4 14.4V12.4H8Z" fill="#3fc23f" stroke="#2a9a2a" stroke-width=".6"/></svg>
<div class="a" style="left:489px;top:880px;width:841px;height:23px;background:#f0f0f0"></div>
<div class="a" style="left:489px;top:881px;width:841px;height:1px;background:#d6d6d6"></div>
<div class="a" style="left:490px;top:881px;width:98px;height:20px;border:1px solid;border-color:#a0a0a0 #fff #fff #a0a0a0"></div>
<div class="a" style="left:590px;top:881px;width:98px;height:20px;border:1px solid;border-color:#a0a0a0 #fff #fff #a0a0a0"></div>
<div class="a" style="left:690px;top:881px;width:118px;height:20px;border:1px solid;border-color:#a0a0a0 #fff #fff #a0a0a0"></div>
<div class="a" style="left:810px;top:881px;width:108px;height:20px;border:1px solid;border-color:#a0a0a0 #fff #fff #a0a0a0"></div>
<div class="a" style="left:920px;top:881px;width:94px;height:20px;border:1px solid;border-color:#a0a0a0 #fff #fff #a0a0a0"></div>
<div class="a seg" style="left:493.3px;top:885px;letter-spacing:-0.44px">Page(s): 1</div>
<div class="a seg" style="left:593.3px;top:885px;letter-spacing:-0.62px">Size: 0.90 KB</div>
<div class="a seg" style="left:693.3px;top:885px;letter-spacing:-0.08px">Resolution: High</div>
<div class="a seg" style="left:813.3px;top:885px;letter-spacing:-0.2px">Blacklists:</div>
<div class="a seg" style="left:883px;top:885px;letter-spacing:0px">S</div>
<div class="a seg" style="left:895.5px;top:885px;letter-spacing:0px">R</div>
<div class="a seg" style="left:923.3px;top:885px;letter-spacing:-0.08px">Profile: Default</div>
<svg style="left:1317px;top:890px" width="11" height="11" viewBox="0 0 11 11"><g fill="#a6a6a6"><rect x="8" y="0" width="2" height="2"/><rect x="4" y="4" width="2" height="2"/><rect x="8" y="4" width="2" height="2"/><rect x="0" y="8" width="2" height="2"/><rect x="4" y="8" width="2" height="2"/><rect x="8" y="8" width="2" height="2"/></g></svg>

</body></html>
